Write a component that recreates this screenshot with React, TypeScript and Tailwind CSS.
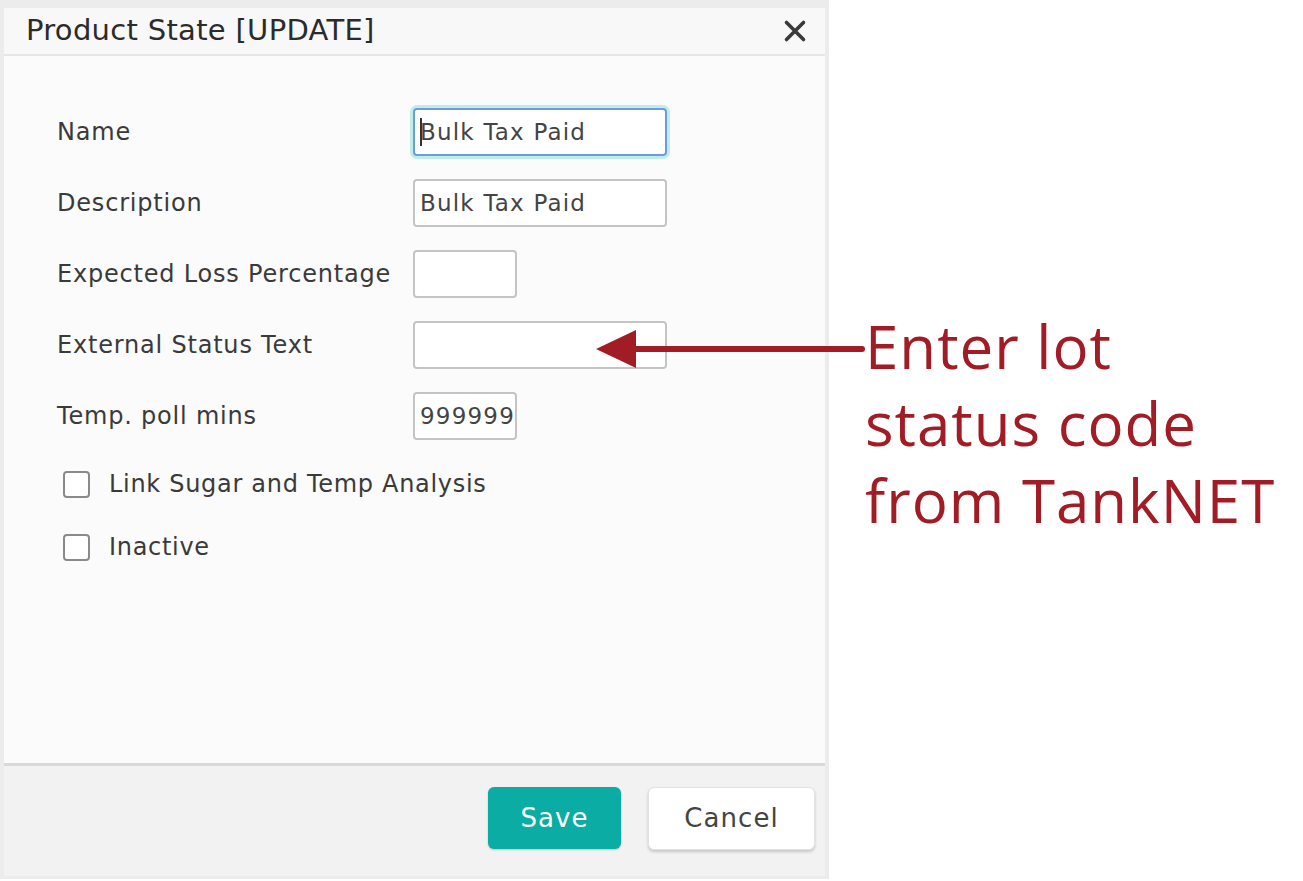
import React from 'react';

const font = { fontFamily: '"DejaVu Sans", "Noto Sans", sans-serif' };

function Field({ label, value, width, focused }: { label: string; value?: string; width: 'wide' | 'narrow'; focused?: boolean }) {
  return (
    <div className="flex items-center h-[48px]">
      <div className="w-[356px] text-[24px] font-medium text-[#3a3a3a] tracking-[0.8px]">{label}</div>
      <div
        className={
          (width === 'wide' ? 'w-[254px] ' : 'w-[104px] ') +
          'h-[48px] bg-white rounded-[4px] flex items-center px-[5px] overflow-hidden ' +
          (focused
            ? 'border-2 border-[#6d9be0] shadow-[0_0_0_3px_#bfeee9]'
            : 'border-2 border-[#c4c4c4]')
        }
      >
        {focused && <span className="w-[2px] h-[28px] bg-[#333] -mr-[2px]" />}
        <span className="text-[23px] text-[#444] whitespace-nowrap tracking-[1.2px]">{value}</span>
      </div>
    </div>
  );
}

function Check({ label }: { label: string }) {
  return (
    <div className="flex items-center h-[28px] pl-[6px]">
      <span className="w-[27px] h-[27px] rounded-[4px] border-2 border-[#8a8a8a] bg-white" />
      <span className="ml-[19px] text-[24px] font-medium text-[#3a3a3a] tracking-[0.7px]">{label}</span>
    </div>
  );
}

export default function App() {
  return (
    <div className="relative w-[1303px] h-[881px] bg-white flex" style={font}>
      {/* dialog */}
      <div className="w-[829px] h-[879px] bg-[#ececec] pt-[8px] px-[4px] pb-[3px] flex flex-col">
        <div className="h-[48px] bg-[#f8f8f8] border-b-2 border-[#e6e6e6] flex items-center justify-between pl-[22px] pr-[18px]">
          <span className="text-[29px] font-medium text-[#2b2b2b] tracking-[0.3px]">Product State [UPDATE]</span>
          <svg width="24" height="24" viewBox="0 0 24 24">
            <path d="M3.5 3.5 L20.5 20.5 M20.5 3.5 L3.5 20.5" stroke="#3a3a3a" strokeWidth="3.6" strokeLinecap="round" />
          </svg>
        </div>
        <div className="flex-1 bg-[#fbfbfb] pt-[52px] pl-[53px] flex flex-col">
          <div className="flex flex-col gap-[23px]">
            <Field label="Name" value="Bulk Tax Paid" width="wide" focused />
            <Field label="Description" value="Bulk Tax Paid" width="wide" />
            <Field label="Expected Loss Percentage" width="narrow" />
            <Field label="External Status Text" width="wide" />
            <Field label="Temp. poll mins" value="999999" width="narrow" />
          </div>
          <div className="flex flex-col gap-[35px] mt-[30px]">
            <Check label="Link Sugar and Temp Analysis" />
            <Check label="Inactive" />
          </div>
        </div>
        <div className="h-[113px] bg-[#f2f2f2] border-t-[3px] border-[#dadada] flex items-center justify-end gap-[27px] pr-[10px] pb-[6px]">
          <button className="w-[133px] h-[62px] rounded-[6px] bg-[#0aaca3] text-white text-[26px] font-medium tracking-[1.1px] shadow-[0_1px_2px_rgba(0,0,0,0.2)]">
            Save
          </button>
          <button className="w-[167px] h-[63px] rounded-[6px] bg-white text-[#444] text-[26px] font-medium tracking-[1.1px] border border-[#e2e2e2] shadow-[0_2px_3px_rgba(0,0,0,0.18)]">
            Cancel
          </button>
        </div>
      </div>

      {/* annotation text */}
      <div className="pl-[36px] pt-[308px] text-[#a11c24] text-[60px] leading-[77px] tracking-[1px]" style={{ fontFamily: '"Open Sans", "Noto Sans", sans-serif' }}>
        <div>Enter lot</div>
        <div>status code</div>
        <div>from TankNET</div>
      </div>

      {/* arrow overlay */}
      <svg className="absolute left-[590px] top-[325px]" width="280" height="50" viewBox="0 0 280 50">
        <line x1="42" y1="24" x2="272" y2="24" stroke="#a11c24" strokeWidth="6" strokeLinecap="round" />
        <polygon points="6,24 46,5 46,43" fill="#a11c24" />
      </svg>
    </div>
  );
}
